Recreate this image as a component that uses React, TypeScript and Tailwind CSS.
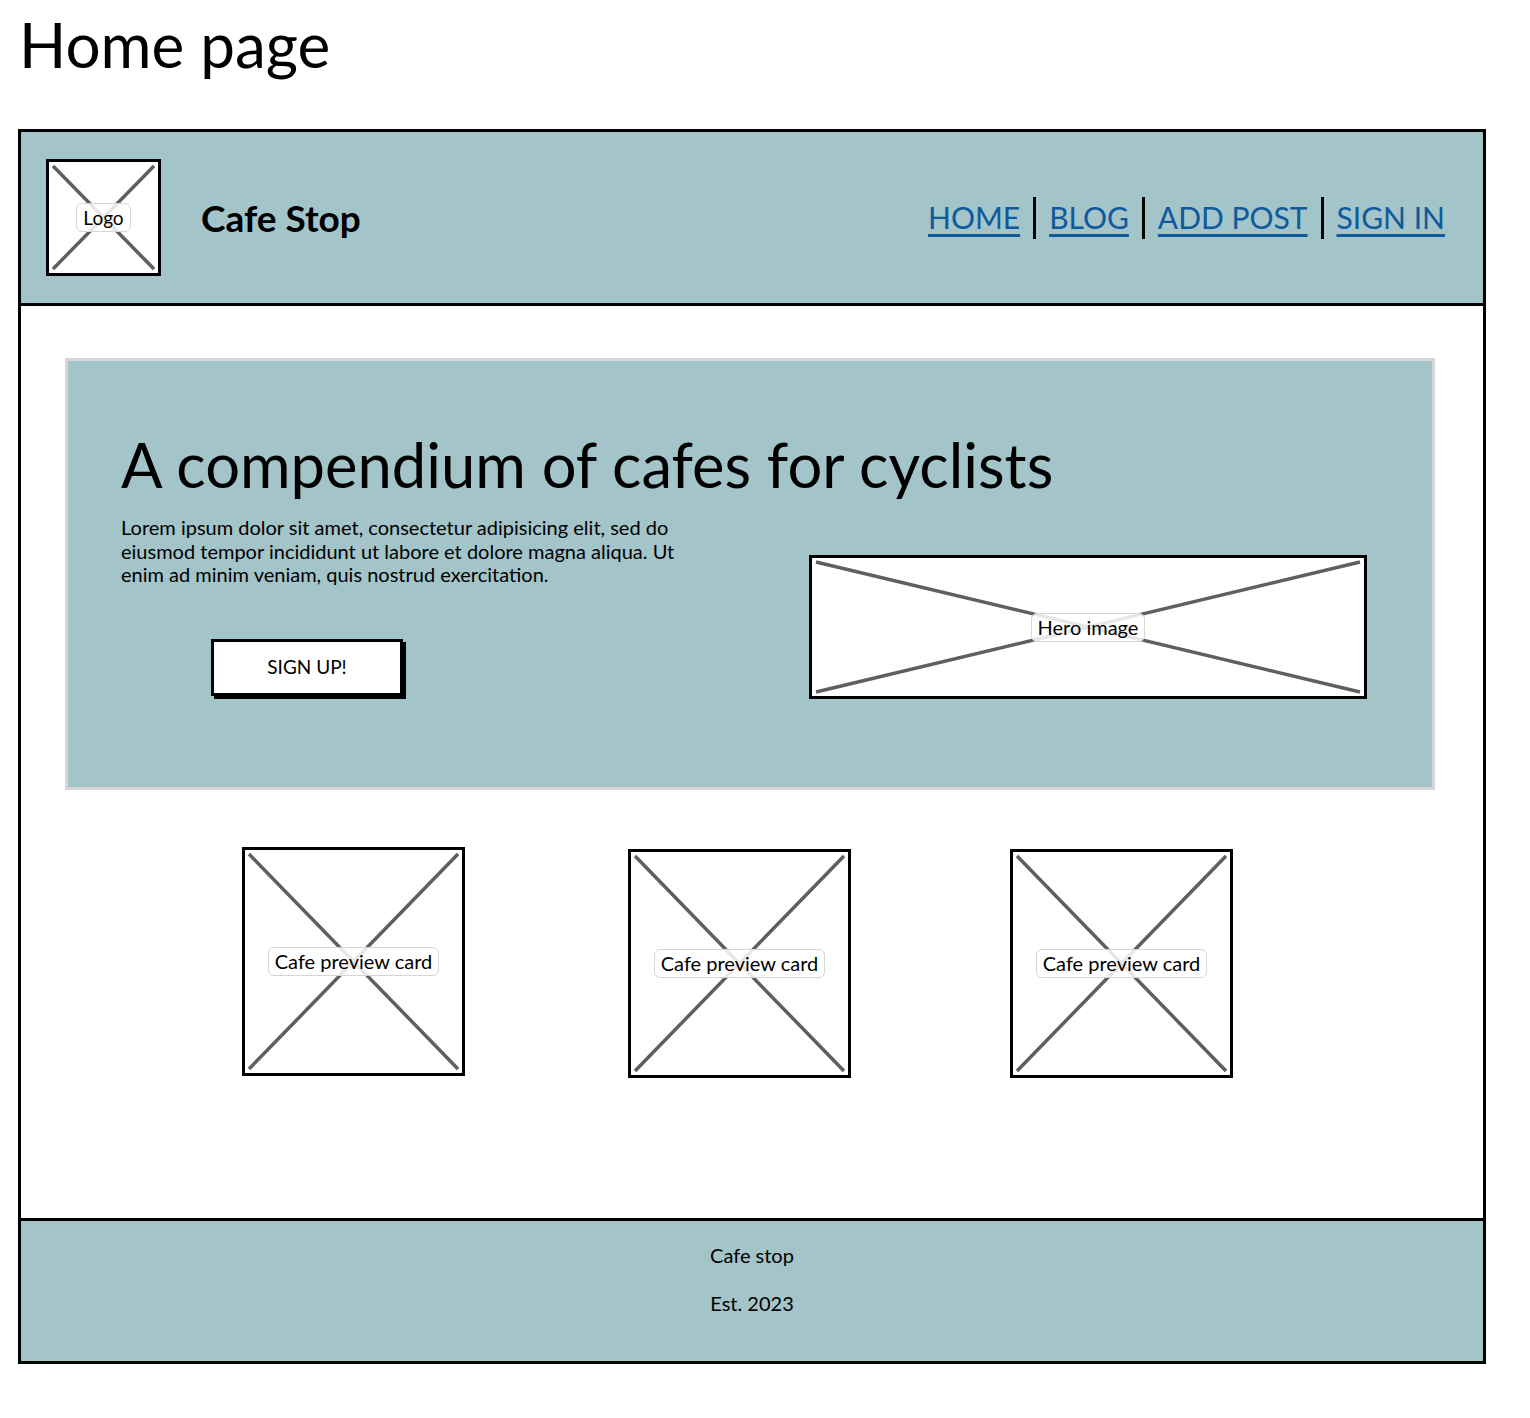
import React from 'react';

const font = { fontFamily: 'Lato, "Noto Sans", sans-serif' };

function Cross() {
  return (
    <div className="absolute inset-[4px]">
      <svg className="h-full w-full overflow-visible">
        <line x1="0" y1="0" x2="100%" y2="100%" stroke="#5f5f5f" strokeWidth="3.5" />
        <line x1="100%" y1="0" x2="0" y2="100%" stroke="#5f5f5f" strokeWidth="3.5" />
      </svg>
    </div>
  );
}

function Placeholder({ label, className, labelClass }: { label: string; className: string; labelClass?: string }) {
  return (
    <div className={`relative bg-white border-[3px] border-black ${className}`}>
      <Cross />
      <div className="absolute inset-0 flex items-center justify-center">
        <span
          className={`rounded-md border border-[#d6d6d6] bg-white/85 px-[6px] leading-[27px] text-black ${labelClass ?? 'text-[20px]'}`}
        >
          {label}
        </span>
      </div>
    </div>
  );
}

const navLinks = ['HOME', 'BLOG', 'ADD POST', 'SIGN IN'];

export default function App() {
  return (
    <div className="min-h-[1418px] w-[1530px] bg-white text-black" style={font}>
      <h1 className="pl-[19px] pt-[10px] text-[62px] leading-[68px]">Home page</h1>

      <div className="ml-[18px] mt-[51px] w-[1468px] border-[3px] border-black">
        {/* header */}
        <header className="flex h-[174px] items-center border-b-[3px] border-black bg-[#a3c4c9] pl-[25px] pr-[38px]">
          <Placeholder label="Logo" className="h-[117px] w-[115px]" labelClass="text-[19px]" />
          <div className="ml-[40px] text-[37px] font-bold">Cafe Stop</div>
          <nav className="ml-auto flex items-center">
            {navLinks.map((link, i) => (
              <React.Fragment key={link}>
                {i > 0 && <span className="mx-[13px] h-[42px] w-[3px] bg-black" />}
                <a href="#" className="text-[30px] text-[#0e5a9c] underline decoration-[3px] underline-offset-[5px]">
                  {link}
                </a>
              </React.Fragment>
            ))}
          </nav>
        </header>

        {/* main */}
        <main className="h-[912px] pt-[52px]">
          <section className="ml-[44px] mr-[48px] flex h-[432px] border-[3px] border-[#d6d6d6] bg-[#a3c4c9] pl-[53px] pt-[66px]">
            <div className="flex flex-col">
              <h2 className="whitespace-nowrap text-[61.5px] leading-[74px]">A compendium of cafes for cyclists</h2>
              <div className="flex">
                <div className="w-[580px] shrink-0">
                  <p className="mt-[15px] text-[20px] leading-[23.5px]">
                    Lorem ipsum dolor sit amet, consectetur adipisicing elit, sed do
                    <br />
                    eiusmod tempor incididunt ut labore et dolore magna aliqua. Ut
                    <br />
                    enim ad minim veniam, quis nostrud exercitation.
                  </p>
                  <button className="ml-[90px] mt-[52px] h-[57px] w-[192px] border-[3px] border-black bg-white text-[19px] shadow-[3px_3px_0_#000]">
                    SIGN UP!
                  </button>
                </div>
                <Placeholder
                  label="Hero image"
                  className="ml-[108px] mt-[54px] h-[144px] w-[558px] shrink-0"
                />
              </div>
            </div>
          </section>

          <div className="mt-[57px] flex pl-[221px]">
            <Placeholder label="Cafe preview card" className="h-[229px] w-[223px]" />
            <Placeholder label="Cafe preview card" className="ml-[163px] mt-[2px] h-[229px] w-[223px]" />
            <Placeholder label="Cafe preview card" className="ml-[159px] mt-[2px] h-[229px] w-[223px]" />
          </div>
        </main>

        {/* footer */}
        <footer className="flex h-[143px] flex-col items-center border-t-[3px] border-black bg-[#a3c4c9] pt-[20px] text-[20px]">
          <p className="leading-[28px]">Cafe stop</p>
          <p className="mt-[20px] leading-[28px]">Est. 2023</p>
        </footer>
      </div>
    </div>
  );
}
